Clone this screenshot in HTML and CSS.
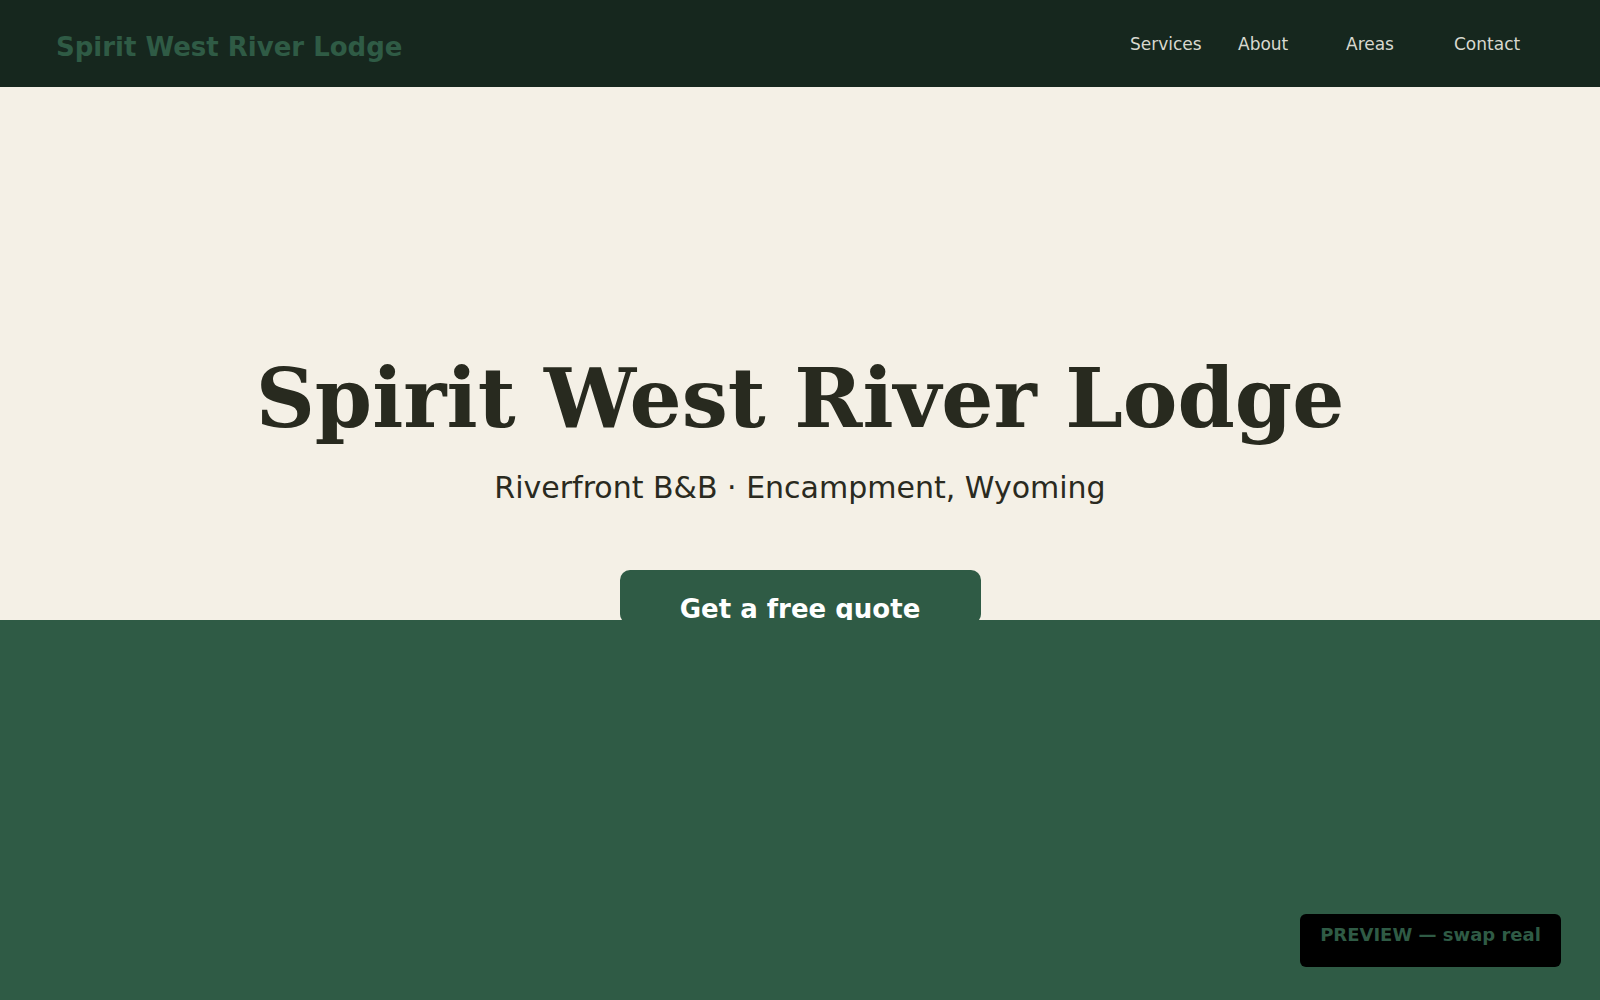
FILE: index.html
```html
<!DOCTYPE html>
<html lang="en">
<head>
<meta charset="utf-8">
<title>Spirit West River Lodge</title>
<link rel="stylesheet" href="styles.css">
</head>
<body>
<header class="site-header">
  <div class="logo">Spirit West River Lodge</div>
  <nav class="nav">
    <a class="nav-link" href="#services">Services</a>
    <a class="nav-link" href="#about">About</a>
    <a class="nav-link" href="#areas">Areas</a>
    <a class="nav-link" href="#contact">Contact</a>
  </nav>
</header>
<section class="hero">
  <h1 class="hero-title">Spirit West River Lodge</h1>
  <p class="hero-sub">Riverfront B&amp;B · Encampment, Wyoming</p>
  <a class="cta" href="#contact">Get a free quote</a>
</section>
<section class="band"></section>
<div class="preview-badge">PREVIEW — swap real</div>
</body>
</html>
```

FILE: styles.css
```css
* { box-sizing: border-box; }
html, body { margin: 0; padding: 0; }
body {
  font-family: "DejaVu Sans", "Liberation Sans", sans-serif;
  background: #2f5b45;
  overflow: hidden;
}
.site-header {
  height: 87px;
  background: #16271e;
  display: flex;
  align-items: center;
  justify-content: space-between;
  padding: 0 56px 0 56px;
}
.logo {
  font-weight: bold;
  font-size: 26px;
  color: #2f5b45;
  padding-top: 6px;
}
.nav {
  display: flex;
  gap: 18px;
}
.nav-link {
  width: 90px;
  color: #d8d8cf;
  text-decoration: none;
  font-size: 17px;
}
.hero {
  height: 533px;
  background: #f4f0e6;
  overflow: hidden;
  display: flex;
  flex-direction: column;
  align-items: center;
  padding-top: 266px;
}
.hero-title {
  margin: 0;
  font-family: "DejaVu Serif", "Liberation Serif", serif;
  font-weight: bold;
  font-size: 82px;
  line-height: 1.1;
  color: #282a1f;
}
.hero-sub {
  margin: 27px 0 0;
  font-size: 30px;
  color: #2a2a20;
}
.cta {
  margin-top: 65px;
  width: 361px;
  height: 80px;
  padding-top: 24px;
  background: #2f5b45;
  color: #ffffff;
  text-decoration: none;
  font-weight: bold;
  font-size: 26px;
  text-align: center;
  border-radius: 10px;
}
.band {
  height: 380px;
  background: #2f5b45;
}
.preview-badge {
  position: fixed;
  right: 39px;
  bottom: 33px;
  width: 261px;
  height: 53px;
  padding: 10px 12px;
  background: #000;
  color: #2f5b45;
  border-radius: 6px;
  font-weight: bold;
  font-size: 18px;
  text-align: center;
}
```
